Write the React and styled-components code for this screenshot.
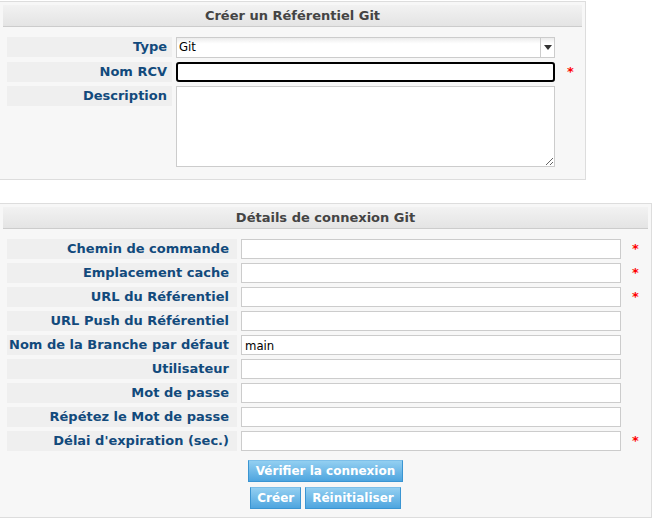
import React from "react";
import styled, { createGlobalStyle } from "styled-components";

const GlobalStyle = createGlobalStyle`
  html, body {
    margin: 0;
    padding: 0;
    background: #ffffff;
  }
  body {
    font-family: "DejaVu Sans", Verdana, sans-serif;
    font-size: 13px;
  }
`;

const Page = styled.div`
  display: flex;
  flex-direction: column;
  align-items: flex-start;
  gap: 23px;
  padding-top: 1px;
`;

const Panel = styled.div`
  width: ${({ $width }) => $width}px;
  box-sizing: border-box;
  background: #f7f7f7;
  border: 1px solid #dddddd;
  border-left: none;
  padding: 3px 3px ${({ $bottom }) => $bottom}px 3px;
`;

const Header = styled.div`
  height: 21px;
  display: flex;
  align-items: center;
  justify-content: center;
  background: linear-gradient(#f2f2f2, #e4e4e4);
  border-bottom: 1px solid #cccccc;
  color: #444444;
  font-weight: bold;
  font-size: 13px;
`;

const Grid = styled.div`
  display: grid;
  grid-template-columns: ${({ $label }) => $label}px ${({ $input }) => $input}px 1fr;
  column-gap: 4px;
  row-gap: 4px;
  padding: 10px 0 0 4px;
`;

const Label = styled.div`
  align-self: start;
  height: 20px;
  background: #efefef;
  color: #124a7c;
  font-weight: bold;
  text-align: right;
  padding-right: ${({ $pad }) => $pad}px;
  line-height: 19px;
  white-space: nowrap;
`;

const TextInput = styled.input`
  box-sizing: border-box;
  width: 100%;
  height: 20px;
  margin: 0;
  padding: 0 3px;
  border: 1px solid #cccccc;
  background: #ffffff;
  font-family: Tahoma, "DejaVu Sans Condensed", "DejaVu Sans", sans-serif;
  font-size: 13px;
  color: #000000;
  outline: none;

  &.focused {
    border: 2px solid #000000;
    border-radius: 3px;
  }
`;

const TextArea = styled.textarea`
  box-sizing: border-box;
  width: 100%;
  height: 81px;
  margin: 0;
  padding: 2px 3px;
  border: 1px solid #cccccc;
  background: #ffffff;
  outline: none;
  resize: both;
  font-family: "DejaVu Sans", sans-serif;
  font-size: 13px;
`;

const SelectBox = styled.div`
  box-sizing: border-box;
  height: 21px;
  display: flex;
  border: 1px solid #cccccc;
  background: linear-gradient(#ececec, #ffffff 30%, #ffffff);
  font-family: Tahoma, "DejaVu Sans Condensed", "DejaVu Sans", sans-serif;
  font-size: 13px;
  color: #000000;
`;

const SelectValue = styled.div`
  flex: 1;
  padding-left: 2px;
  line-height: 17px;
`;

const SelectArrow = styled.div`
  width: 13px;
  border-left: 1px solid #cccccc;
  display: flex;
  align-items: center;
  justify-content: center;

  &::after {
    content: "";
    border-left: 4px solid transparent;
    border-right: 4px solid transparent;
    border-top: 5px solid #333333;
  }
`;

const Required = styled.div`
  align-self: start;
  padding-left: ${({ $gap }) => $gap}px;
  color: #ff0000;
  font-weight: bold;
  font-size: 13px;
  line-height: 20px;
`;

const Buttons = styled.div`
  display: flex;
  flex-direction: column;
  align-items: center;
  gap: 5px;
  margin-top: 9px;
`;

const ButtonRow = styled.div`
  display: flex;
  gap: 4px;
`;

const Button = styled.button`
  height: 22px;
  margin: 0;
  padding: 0 ${({ $pad }) => $pad}px;
  border: 1px solid #3b95d2;
  border-top-color: #7dbfe9;
  background: linear-gradient(#93cff1, #4ea5df);
  color: #ffffff;
  font-family: "DejaVu Sans", Verdana, sans-serif;
  font-weight: bold;
  font-size: 12px;
  cursor: pointer;
`;

const repoRows = [
  { label: "Chemin de commande", required: true },
  { label: "Emplacement cache", required: true },
  { label: "URL du Référentiel", required: true },
  { label: "URL Push du Référentiel" },
  { label: "Nom de la Branche par défaut", value: "main" },
  { label: "Utilisateur" },
  { label: "Mot de passe" },
  { label: "Répétez le Mot de passe" },
  { label: "Délai d'expiration (sec.)", required: true },
];

export default function App() {
  return (
    <>
      <GlobalStyle />
      <Page>
        <Panel $width={586} $bottom={12}>
          <Header>Créer un Référentiel Git</Header>
          <Grid $label={165} $input={379}>
            <Label $pad={5}>Type</Label>
            <SelectBox>
              <SelectValue>Git</SelectValue>
              <SelectArrow />
            </SelectBox>
            <Required $gap={8} />

            <Label $pad={5}>Nom RCV</Label>
            <TextInput className="focused" />
            <Required $gap={8}>*</Required>

            <Label $pad={5}>Description</Label>
            <TextArea />
            <Required $gap={8} />
          </Grid>
        </Panel>

        <Panel $width={652} $bottom={8}>
          <Header>Détails de connexion Git</Header>
          <Grid $label={230} $input={380}>
            {repoRows.map((row) => (
              <React.Fragment key={row.label}>
                <Label $pad={8}>{row.label}</Label>
                <TextInput defaultValue={row.value || ""} />
                <Required $gap={7}>{row.required ? "*" : ""}</Required>
              </React.Fragment>
            ))}
          </Grid>
          <Buttons>
            <Button $pad={7}>Vérifier la connexion</Button>
            <ButtonRow>
              <Button $pad={6}>Créer</Button>
              <Button $pad={6}>Réinitialiser</Button>
            </ButtonRow>
          </Buttons>
        </Panel>
      </Page>
    </>
  );
}
